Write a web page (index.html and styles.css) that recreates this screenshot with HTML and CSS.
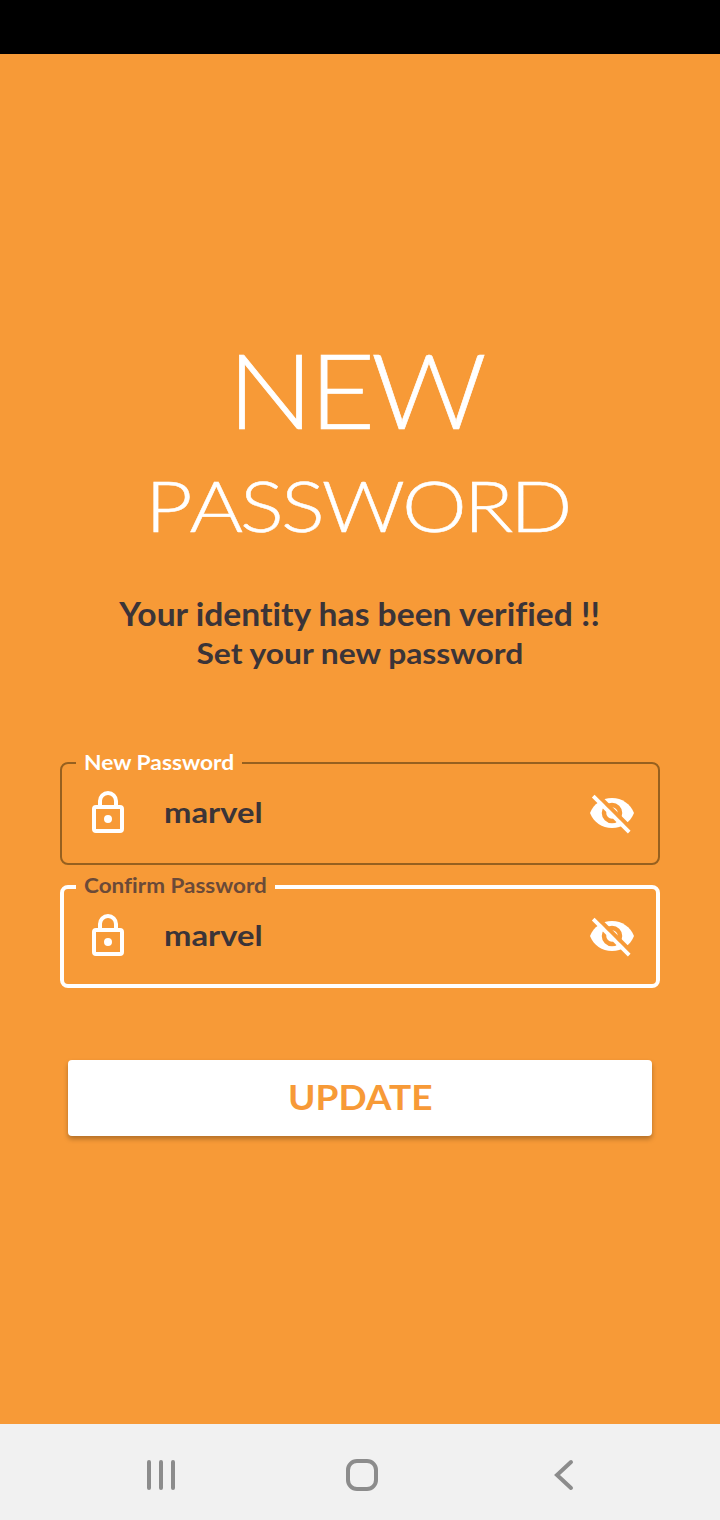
FILE: index.html
```html
<!DOCTYPE html>
<html lang="en">
<head>
<meta charset="utf-8">
<title>New Password</title>
<link rel="stylesheet" href="styles.css">
</head>
<body>
<svg width="0" height="0" class="defs">
  <symbol id="lock" viewBox="0 0 24 24"><path d="M12 17a2 2 0 1 0 0-4 2 2 0 0 0 0 4zm6-9h-1V6A5 5 0 0 0 7 6v2H6a2 2 0 0 0-2 2v10a2 2 0 0 0 2 2h12a2 2 0 0 0 2-2V10a2 2 0 0 0-2-2zM9 6a3 3 0 0 1 6 0v2H9V6zm9 14H6V10h12v10z"/></symbol>
  <symbol id="eye-off" viewBox="0 0 48 48">
    <path d="M2 24C5.500 15 14 9 24 9s18.500 6 22 15c-3.500 9-12 15-22 15S5.500 33 2 24z"/>
    <circle class="cut" cx="24" cy="24" r="8" stroke-width="4.500"/>
    <path class="cut" d="M8 4.500l36 36" stroke-width="4"/>
    <path class="slash" d="M5.200 7.200l36 36" stroke-width="3.800"/>
  </symbol>
</svg>
<div class="status"></div>
<main>
  <h1>NEW</h1>
  <h2>PASSWORD</h2>
  <p class="verified">Your identity has been verified !!</p>
  <p class="hint">Set your new password</p>
  <div class="field">
    <span class="label"><span class="label-text">New Password</span></span>
    <svg class="icon"><use href="#lock"/></svg>
    <span class="value">marvel</span>
    <svg class="icon"><use href="#eye-off"/></svg>
  </div>
  <div class="field active">
    <span class="label"><span class="label-text">Confirm Password</span></span>
    <svg class="icon"><use href="#lock"/></svg>
    <span class="value">marvel</span>
    <svg class="icon"><use href="#eye-off"/></svg>
  </div>
  <button><span>UPDATE</span></button>
</main>
<nav>
  <svg width="32" height="32"><path d="M4 3v26M16 3v26M28 3v26"/></svg>
  <svg width="32" height="32"><rect x="2" y="2" width="28" height="28" rx="9"/></svg>
  <svg width="32" height="32"><path d="M24 3L10 16l14 13"/></svg>
</nav>
</body>
</html>
```
FILE: styles.css
```css
* { box-sizing: border-box; margin: 0; }
body { height: 1520px; display: flex; flex-direction: column; background: #f79a37; font-family: Lato, sans-serif; font-variant-ligatures: none; color: #3b3438; }
.defs { position: absolute; }
.status { height: 54px; background: #000; }
main { flex: 1; display: flex; flex-direction: column; align-items: center; padding: 272px 60px 0; white-space: nowrap; }
h1 { font-weight: 300; font-size: 105.500px; line-height: 125px; color: #fff; -webkit-text-stroke: .7px #fff; letter-spacing: -4px; transform: translateX(-5px) scaleX(1.08); }
h2 { margin-top: 5px; font-weight: 300; font-size: 70px; line-height: 99px; color: #fff; -webkit-text-stroke: .5px #fff; font-kerning: none; letter-spacing: -2.600px; transform: translateX(-3px) scaleX(1.17); }
.verified { margin-top: 39px; font-weight: 700; font-size: 32px; line-height: 40px; transform: scaleX(1.051); }
.hint { font-weight: 700; font-size: 28px; line-height: 38px; transform: scaleX(1.136); }
.field { position: relative; width: 600px; height: 103px; margin-top: 90px; border: 2px solid #96601f; border-radius: 8px; display: flex; align-items: center; padding: 0 22px 2px; }
.field.active { margin-top: 20px; border: 4px solid #fff; padding: 0 20px 2px; }
.label { position: absolute; left: 14px; top: -15px; width: 166px; height: 26px; padding: 0 8px; background: #f79a37; color: #fff; font-size: 21px; line-height: 26px; font-weight: 700; }
.active .label { left: 12px; top: -17px; width: 199px; color: #6b4a38; }
.label-text { display: inline-block; transform: scaleX(1.085); transform-origin: left; }
.active .label-text { transform: scaleX(1.07); }
.icon { flex: none; width: 48px; height: 48px; fill: #fff; }
.value { margin: 0 auto 2px 32px; font-weight: 700; font-size: 28px; transform: scaleX(1.17); transform-origin: left; }
.cut { fill: none; stroke: #f79a37; }
.slash { fill: none; stroke: #fff; }
button { width: 584px; height: 76px; margin-top: 72px; padding: 0 0 2px; border: 0; border-radius: 4px; background: #fff; box-shadow: 0 3px 5px rgba(0,0,0,.28); color: #f79a37; font: 700 34px/74px Lato, sans-serif; }
button span { display: inline-block; transform: scaleX(1.09); }
nav { height: 96px; background: #f1f1f1; display: grid; grid-template-columns: 32px 32px 32px; gap: 169px; padding: 35px 0 0 145px; }
nav svg { fill: none; stroke: #8c8c8c; stroke-width: 4; stroke-linecap: round; }
```
